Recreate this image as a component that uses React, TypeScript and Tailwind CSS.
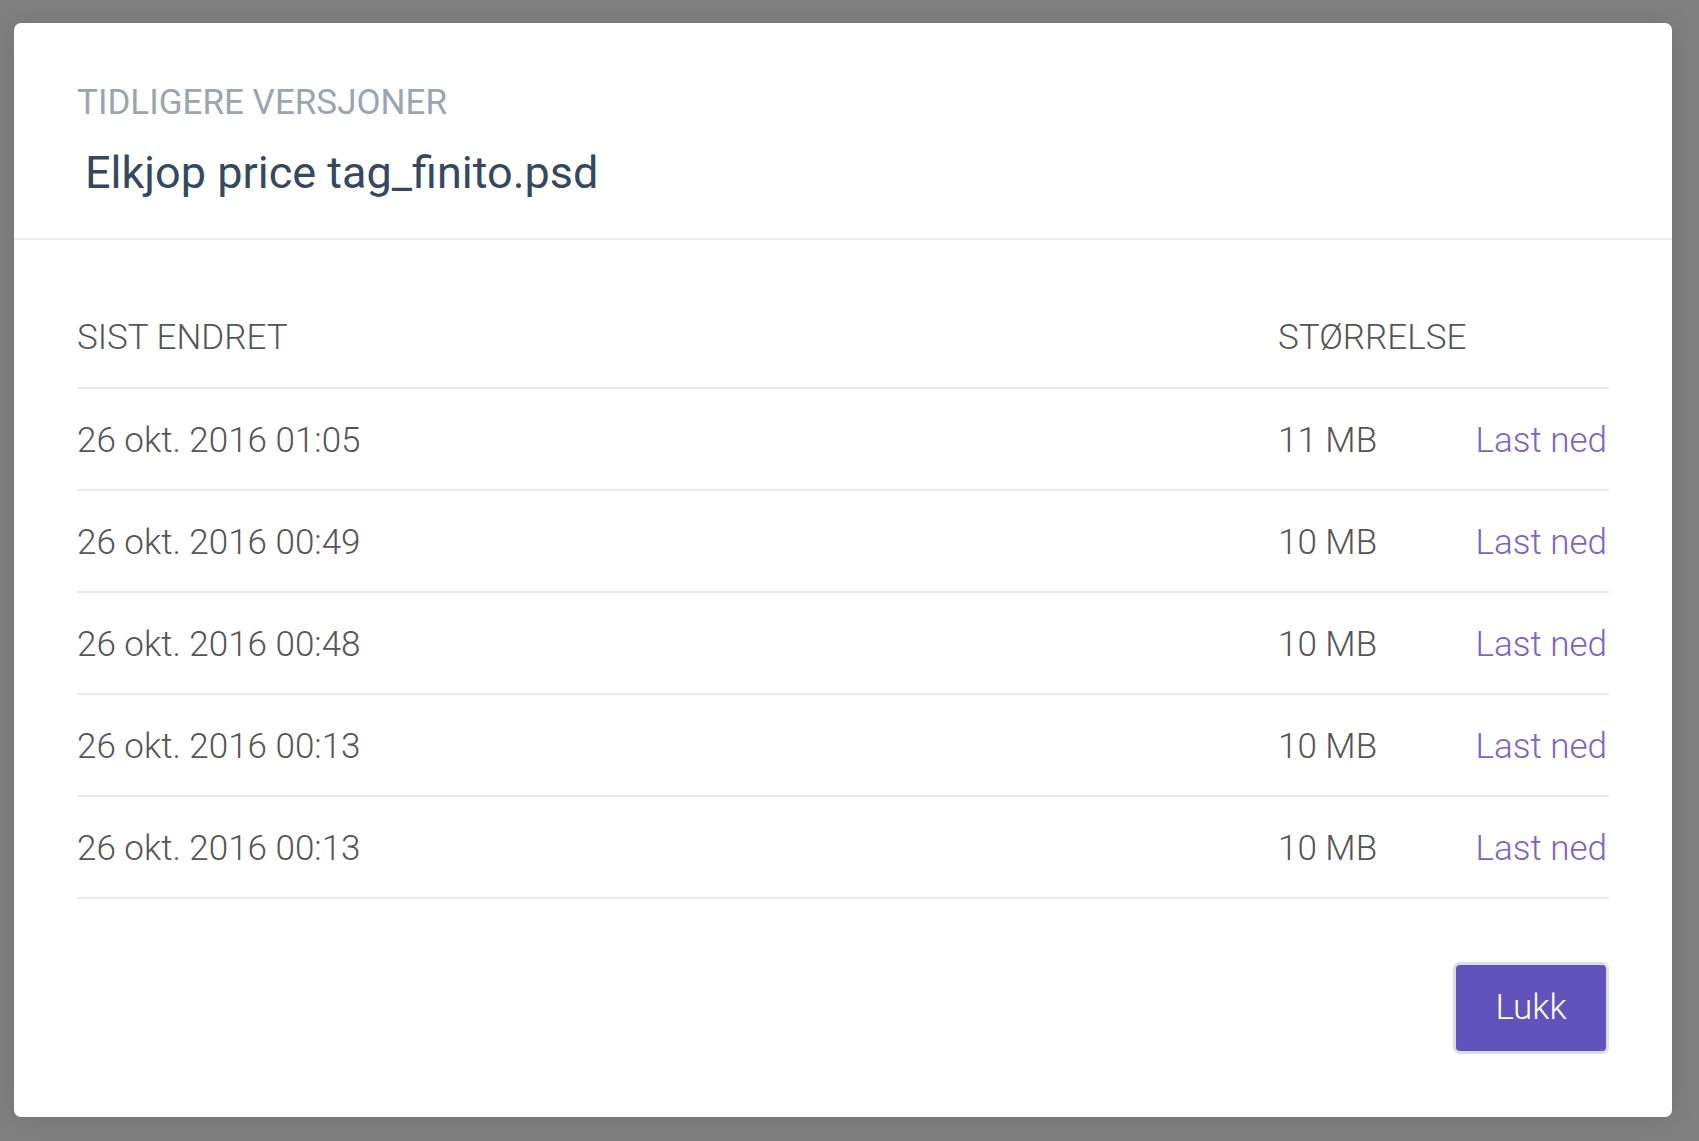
import React from 'react';

const versions = [
  { date: '26 okt. 2016 01:05', size: '11 MB' },
  { date: '26 okt. 2016 00:49', size: '10 MB' },
  { date: '26 okt. 2016 00:48', size: '10 MB' },
  { date: '26 okt. 2016 00:13', size: '10 MB' },
  { date: '26 okt. 2016 00:13', size: '10 MB' },
];

const App: React.FC = () => {
  return (
    <div
      className="min-h-[1141px] w-full bg-[#808080] pt-[23px] pl-[14px]"
      style={{ fontFamily: 'Roboto, "Noto Sans", sans-serif' }}
    >
      <div className="w-[1658px] h-[1094px] bg-white rounded-[7px] shadow-[0_0_24px_rgba(0,0,0,0.12)] flex flex-col">
        <div className="pt-[59px] pb-[39px] px-[63px] border-b-2 border-[#ebebeb]">
          <div className="text-[35px] leading-[42px] text-[#9aa6ae] uppercase">Tidligere versjoner</div>
          <h1 className="mt-[23px] ml-[8px] text-[45px] leading-[52px] text-[#34495e]">
            Elkjop price tag_finito.psd
          </h1>
        </div>

        <div className="px-[63px] pt-[49px]">
          <div className="grid grid-cols-[1fr_200px_131px] h-[100px] items-center border-b-2 border-[#ebebeb] text-[35px] leading-[42px] font-light text-[#555555]">
            <div>SIST ENDRET</div>
            <div>STØRRELSE</div>
            <div />
          </div>
          {versions.map((v, i) => (
            <div
              key={i}
              className="grid grid-cols-[1fr_200px_131px] h-[102px] pt-[4px] items-center border-b-2 border-[#ebebeb] text-[35px] leading-[42px] font-light text-[#555555]"
            >
              <div>{v.date}</div>
              <div>{v.size}</div>
              <a href="#" className="justify-self-end whitespace-nowrap pr-[2px] text-[#7c62c8]">
                Last ned
              </a>
            </div>
          ))}

          <div className="flex justify-end mt-[63px]">
            <button className="w-[156px] h-[92px] rounded-[7px] border-[3px] border-[#dedede] bg-[#6153bb] text-white text-[35px] leading-[42px] font-light">
              Lukk
            </button>
          </div>
        </div>
      </div>
    </div>
  );
};

export default App;
